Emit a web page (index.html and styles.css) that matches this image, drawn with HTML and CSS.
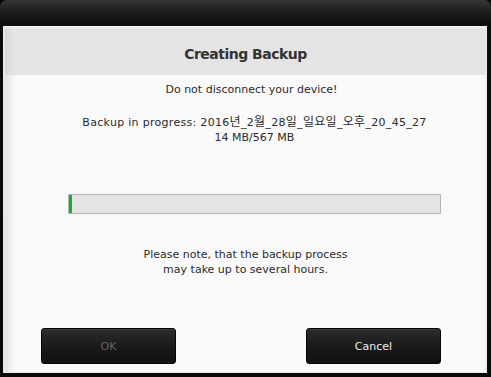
FILE: index.html
```html
<!DOCTYPE html>
<html>
<head>
<meta charset="utf-8">
<link rel="stylesheet" href="styles.css">
</head>
<body>
<div class="window">
  <div class="titlebar"></div>
  <div class="dialog">
    <div class="panel">
      <div class="header">Creating Backup</div>
      <div class="content">
        <p class="warn">Do not disconnect your device!</p>
        <p class="status"><span class="line1">Backup in progress: 2016<span class="ko">년</span>_2<span class="ko">월</span>_28<span class="ko">일</span>_<span class="ko">일요일</span>_<span class="ko">오후</span>_20_45_27</span><br>14 MB/567 MB</p>
        <div class="progress"><div class="fill" style="width:3px"></div></div>
        <p class="note">Please note, that the backup process<br>may take up to several hours.</p>
        <div class="buttons">
          <button class="btn disabled">OK</button>
          <button class="btn">Cancel</button>
        </div>
      </div>
    </div>
  </div>
</div>
</body>
</html>
```

FILE: styles.css
```css
html, body {
  margin: 0;
  padding: 0;
  background: #0a0a0a;
}
.window {
  width: 491px;
  height: 377px;
  background: linear-gradient(#363636 0px, #1a1a1a 14px, #0c0c0c 26px, #0a0a0a 100%);
  border-radius: 7px 7px 0 0;
  display: flex;
  flex-direction: column;
  font-family: "DejaVu Sans", "Noto Sans CJK KR", sans-serif;
  font-size: 11px;
  color: #2a2a2a;
}
.titlebar {
  height: 26px;
  flex: none;
}
.dialog {
  margin: 0 4px 0 3px;
  height: 347px;
  background: #e9e9e9;
  padding: 2px 1px 1px 2px;
  box-sizing: border-box;
  border-top: 1px solid #f4f4f4;
}
.panel {
  height: 100%;
  display: flex;
  flex-direction: column;
  background: #fafafa;
  box-shadow: inset 10px 0 8px -6px rgba(0,0,0,0.10), inset -6px 0 6px -5px rgba(0,0,0,0.06);
}
.header {
  height: 46px;
  flex: none;
  background: #e4e4e4;
  box-shadow: inset 8px 0 8px -6px rgba(0,0,0,0.08);
  display: flex;
  align-items: center;
  justify-content: center;
  padding-top: 3px;
  box-sizing: border-box;
  font-weight: bold;
  font-size: 14px;
  color: #333;
  letter-spacing: -0.5px;
}
.content {
  flex: 1;
  display: flex;
  flex-direction: column;
  align-items: center;
}
p {
  margin: 0;
  text-align: center;
  line-height: 15px;
}
.warn {
  margin-top: 7px;
  padding-left: 12px;
}
.status {
  margin-top: 16px;
  padding-left: 18px;
}
.line1 {
  letter-spacing: 0.3px;
}
.ko {
  font-family: "Noto Sans CJK KR", sans-serif;
  font-size: 12px;
}
.progress {
  align-self: flex-start;
  margin-top: 49px;
  margin-left: 63px;
  width: 371px;
  height: 18px;
  border: 1px solid #b5b5b5;
  background: #e4e4e4;
  display: flex;
}
.fill {
  height: 100%;
  background: #0db12f;
}
.note {
  margin-top: 33px;
}
.buttons {
  align-self: flex-start;
  margin-top: 51px;
  margin-left: 36px;
  display: flex;
  gap: 130px;
}
.btn {
  width: 135px;
  height: 36px;
  border: 1px solid #050505;
  border-radius: 3px;
  background: linear-gradient(#2c2c2c, #1a1a1a 50%, #111 100%);
  box-shadow: inset 0 1px 0 #3a3a3a;
  color: #f0f0f0;
  font-family: "DejaVu Sans", sans-serif;
  font-size: 11px;
  padding: 0;
}
.btn.disabled {
  color: #666;
}
```
